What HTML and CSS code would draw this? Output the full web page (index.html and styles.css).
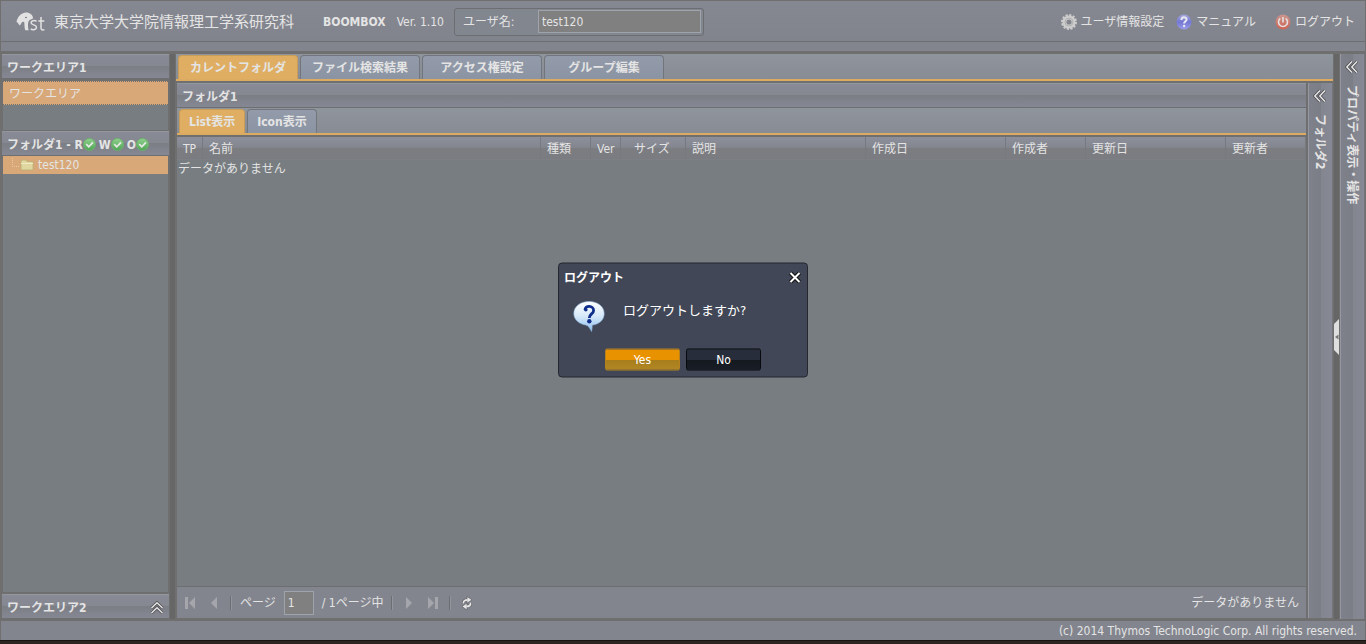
FILE: index.html
```html
<!DOCTYPE html>
<html lang="ja">
<head>
<meta charset="utf-8">
<title>BOOMBOX</title>
<link rel="stylesheet" href="styles.css">
</head>
<body>
<svg class="defs" aria-hidden="true">
  <defs>
    <linearGradient id="green" x1="0" y1="0" x2="0" y2="1"><stop offset="0" stop-color="#8fd08c"/><stop offset="1" stop-color="#4fa455"/></linearGradient>
    <linearGradient id="blue" x1="0" y1="0" x2="0" y2="1"><stop offset="0" stop-color="#a3a5dc"/><stop offset="0.5" stop-color="#7377d2"/><stop offset="1" stop-color="#9a9de8"/></linearGradient>
    <linearGradient id="red" x1="0" y1="0" x2="0" y2="1"><stop offset="0" stop-color="#c9968f"/><stop offset="1" stop-color="#cf6253"/></linearGradient>
    <linearGradient id="bubble" x1="0" y1="0" x2="0" y2="1"><stop offset="0" stop-color="#ffffff"/><stop offset="0.5" stop-color="#d5e8fa"/><stop offset="1" stop-color="#8fc0ee"/></linearGradient>
    <symbol id="check" viewBox="0 0 12 12"><circle cx="6" cy="6" r="5.6" fill="url(#green)" stroke="#6ab56b" stroke-width="0.7"/><path d="M3 5.7l2.3 2.4L9.2 4" fill="none" stroke="#e6e8e6" stroke-width="1.7"/></symbol>
    <symbol id="chevrons" viewBox="0 0 14 14"><path d="M7 1.5L1.8 7L7 12.5M12 1.5L6.8 7l5.200 5.500" fill="none" stroke="#4c4c50" stroke-width="3"/><path d="M7 1.500L1.800 7L7 12.500M12 1.500L6.800 7l5.200 5.500" fill="none" stroke="#e6e6e6" stroke-width="1.500"/></symbol>
  </defs>
</svg>
<div class="app">
  <header class="top">
    <div class="top-row">
      <svg class="logo" viewBox="0 0 30 20" aria-hidden="true">
        <path d="M.5 10C1.500 5 5 1 10 .6c4 0 7 2.600 7 5.600-1 1.300-2.500 1-3.600 2-1.400 1.300-1.200 2.600-1.400 4.200 0 2.200 0 4 .8 5.800H9.200c-.8-2.400-.6-5-1-8.200C6.500 9.500 5.800 10 4 13.500 2 12.300 2.400 10.500.5 10z" fill="#e2e2e2"/>
        <circle cx="10" cy="5.500" r=".8" fill="#666"/>
        <path d="M20.500 9.300c-2-1.300-5.500-.8-5.400 1.500 0 2.500 5.400 1.700 5.400 4.500 0 2.400-3.600 3-5.800 1.700M25 5v11c0 2 1.500 2.300 3.500 1.600M22.300 9h6" fill="none" stroke="#e2e2e2" stroke-width="1.500"/>
      </svg>
      <span class="org">東京大学大学院情報理工学系研究科</span>
      <strong class="product">BOOMBOX</strong>
      <span>Ver. 1.10</span>
      <div class="user-box">
        <label for="user">ユーザ名:</label>
        <input id="user" class="field user" type="text" value="test120" readonly>
      </div>
      <nav class="links">
        <a href="#"><svg class="icon" viewBox="0 0 16 16" aria-hidden="true"><circle cx="8" cy="8" r="7" fill="none" stroke="#cdcdcd" stroke-width="2" stroke-dasharray="2.200 1.460"/><circle cx="8" cy="8" r="4.600" fill="none" stroke="#cdcdcd" stroke-width="4"/><circle cx="8" cy="8" r="4" fill="none" stroke="#aaa" stroke-width=".8"/></svg>ユーザ情報設定</a>
        <a href="#"><svg class="icon" viewBox="0 0 16 16" aria-hidden="true"><circle cx="8" cy="8" r="7.500" fill="url(#blue)"/><path d="M5.400 6c0-3.600 5.200-3.300 5.200-.5 0 1.900-2.500 1.900-2.500 4" fill="none" stroke="#e8e8f0" stroke-width="2"/><circle cx="8.100" cy="12" r="1.200" fill="#e8e8f0"/></svg>マニュアル</a>
        <a href="#" class="logout"><svg class="icon" viewBox="0 0 16 16" aria-hidden="true"><circle cx="8" cy="8" r="7.500" fill="url(#red)"/><path d="M5.300 4.400a4.500 4.500 0 1 0 5.400 0M8 3v5.500" fill="none" stroke="#e4e0e0" stroke-width="1.600"/></svg>ログアウト</a>
      </nav>
    </div>
    <div class="top-strip"></div>
  </header>

  <main class="work">
    <aside class="left">
      <section class="pane">
        <h2 class="bar">ワークエリア1</h2>
        <div class="area"><a href="#" class="area-item">ワークエリア</a></div>
      </section>
      <section class="pane grow">
        <h2 class="bar">フォルダ1 - R<svg class="mark" aria-hidden="true"><use href="#check"/></svg> W<svg class="mark" aria-hidden="true"><use href="#check"/></svg> O<svg class="mark" aria-hidden="true"><use href="#check"/></svg></h2>
        <ul class="tree"><li>
          <svg class="elbow" viewBox="0 0 8 9" aria-hidden="true"><path d="M.5 0v8.500H8" fill="none" stroke="#e8c9a4" stroke-dasharray="1 1"/></svg>
          <svg class="folder" viewBox="0 0 14 12" aria-hidden="true"><path d="M1 11V2.500L2 1h4l1 1.500h6V11z" fill="#dfd79f" stroke="#b9ad75" stroke-width=".8"/><path d="M1 4.500h12" stroke="#efeac4"/></svg>
          test120</li></ul>
      </section>
      <button type="button" class="bar fold-up">ワークエリア2<svg class="chev up" aria-hidden="true"><use href="#chevrons"/></svg></button>
    </aside>
    <div class="splitter"></div>

    <section class="center">
      <div class="tabs main-tabs">
        <button type="button" class="tab active">カレントフォルダ</button>
        <button type="button" class="tab">ファイル検索結果</button>
        <button type="button" class="tab">アクセス権設定</button>
        <button type="button" class="tab">グループ編集</button>
      </div>
      <div class="folders">
        <div class="folder-pane">
          <h2 class="bar">フォルダ1</h2>
          <div class="tabs sub-tabs">
            <button type="button" class="tab active">List表示</button>
            <button type="button" class="tab">Icon表示</button>
          </div>
          <div class="list">
            <table class="grid">
              <colgroup><col class="w26"><col><col class="w50"><col class="w30"><col class="w65"><col class="w180"><col class="w140"><col class="w80"><col class="w140"><col class="w80"></colgroup>
              <thead><tr><th>TP</th><th>名前</th><th>種類</th><th>Ver</th><th class="mid">サイズ</th><th>説明</th><th>作成日</th><th>作成者</th><th>更新日</th><th>更新者</th></tr></thead>
              <tbody><tr><td colspan="10">データがありません</td></tr></tbody>
            </table>
          </div>
          <footer class="paging">
            <button type="button" class="pg" aria-label="最初"><svg viewBox="0 0 16 16"><path d="M3 2h3v12H3zM13 2v12L7 8z" fill="#a4a6ab"/></svg></button>
            <button type="button" class="pg" aria-label="前"><svg viewBox="0 0 16 16"><path d="M11 2v12L5 8z" fill="#a4a6ab"/></svg></button>
            <span class="sep"></span>
            <label for="page">ページ</label>
            <input id="page" class="field page" type="text" value="1">
            <span>/ 1ページ中</span>
            <span class="sep"></span>
            <button type="button" class="pg" aria-label="次"><svg viewBox="0 0 16 16"><path d="M5 2v12l6-6z" fill="#a4a6ab"/></svg></button>
            <button type="button" class="pg" aria-label="最後"><svg viewBox="0 0 16 16"><path d="M10 2h3v12h-3zM3 2v12l6-6z" fill="#a4a6ab"/></svg></button>
            <span class="sep"></span>
            <button type="button" class="pg" aria-label="更新"><svg viewBox="0 0 16 16"><path d="M4.500 8.500Q4 5 8.500 5M11.500 7.500Q12 11.500 7.500 11.500" fill="none" stroke="#55565a" stroke-width="3"/><path d="M8 1.500L13 4.800 8 8.300zM8 8L3 11.500 8 15z" fill="#e6e6e6" stroke="#55565a" stroke-width=".6"/><path d="M4.500 8.500Q4 5 8.500 5M11.500 7.500Q12 11.500 7.500 11.500" fill="none" stroke="#e6e6e6" stroke-width="1.800"/></svg></button>
            <span class="status">データがありません</span>
          </footer>
        </div>
        <button type="button" class="vbar"><svg class="chev" aria-hidden="true"><use href="#chevrons"/></svg><span>フォルダ2</span></button>
      </div>
    </section>
    <div class="splitter handle-holder"><svg class="handle" viewBox="0 0 5 36" aria-hidden="true"><path d="M5 0v36L0 31V5z" fill="#dedede"/><path d="M4.500 15.500v5L1 18z" fill="#777"/></svg></div>
    <button type="button" class="vbar"><svg class="chev" aria-hidden="true"><use href="#chevrons"/></svg><span>プロパティ表示・操作</span></button>
  </main>
  <footer class="copyright">(c) 2014 Thymos TechnoLogic Corp. All rights reserved.</footer>

  <div class="dialog" role="dialog" aria-labelledby="dialog-title">
    <div class="dialog-head"><h3 id="dialog-title">ログアウト</h3>
      <button type="button" class="close" aria-label="閉じる"><svg viewBox="0 0 14 14"><path d="M2.500 2.500l9 9M11.500 2.500l-9 9" stroke="#111" stroke-width="4"/><path d="M2.500 2.500l9 9M11.500 2.500l-9 9" stroke="#fff" stroke-width="2"/></svg></button></div>
    <div class="dialog-body">
      <svg class="question" viewBox="0 0 32 32" aria-hidden="true"><path d="M16 1C7 1 .8 6.200.8 13c0 6 5 10.300 12 11.600 2.500.5 3.700 2.600 5.700 6.400.8-2.500.6-4.300.7-6.300C27 23.500 31.200 19 31.200 13 31.200 6.200 25 1 16 1z" fill="url(#bubble)" stroke="#8eb5dd" stroke-width=".6"/><path d="M12 9.500c0-5 8.600-4.700 8.600.4 0 3.600-4.300 3.500-4.300 7.600" fill="none" stroke="#102f8c" stroke-width="2.800"/><circle cx="12.800" cy="9.300" r="1.800" fill="#102f8c"/><circle cx="16.300" cy="20.800" r="2.200" fill="#102f8c"/></svg>
      <p>ログアウトしますか?</p>
    </div>
    <div class="dialog-foot"><button type="button" class="yes">Yes</button><button type="button" class="no">No</button></div>
  </div>
</div>
<div class="desk"></div>
</body>
</html>
```
FILE: styles.css
```css
* { box-sizing: border-box; }
body {
  margin: 0;
  height: 100vh;
  display: flex;
  flex-direction: column;
  overflow: hidden;
  background: #6f6f6f;
  color: #e4e4e4;
  font: 12px/16px "DejaVu Sans Condensed", "Noto Sans CJK JP", sans-serif;
}
button, input { font: inherit; color: inherit; }
button { padding: 0; border: 0; background: none; }
a { color: inherit; text-decoration: none; }
h2, h3, p, ul { margin: 0; padding: 0; font-size: 12px; }
svg { display: block; }
.defs { position: absolute; width: 0; height: 0; }
.app { position: relative; flex: 1; min-height: 0; display: flex; flex-direction: column; padding: 1px 1px 0; }
.desk { height: 4px; background: #2e241f; border-top: 1px solid #171312; }

/* header */
.top { background: #82858e; }
.top-row { display: flex; align-items: center; height: 41px; padding: 1px 10px 0 15px; border-bottom: 1px solid #6d6e72; background: linear-gradient(#858891, #82848d); }
.logo { width: 30px; height: 20px; }
.org { margin: 0 29px 0 8px; font-size: 15px; line-height: 24px; }
.product { margin-right: 11px; }
.user-box { display: flex; align-items: center; width: 250px; height: 28px; margin-left: 10px; padding: 0 2px 0 8px; border: 1px solid #6d6e72; border-radius: 3px; background: #82868f; }
.user-box label { width: 75px; }
.field { border: 1px solid #9ea3ac; background: #808080; padding: 0 3px; outline: 0; }
.user { flex: 1; min-width: 0; height: 23px; }
.links { display: flex; margin-left: auto; gap: 12px; }
.links a { display: flex; align-items: center; gap: 4px; }
.links .logout { margin-left: 7px; }
.icon { width: 16px; height: 16px; }
.top-strip { height: 9px; }

/* left column */
.work { flex: 1; min-height: 0; display: flex; padding-top: 3px; }
.left { width: 168px; display: flex; flex-direction: column; padding-left: 1px; }
.bar {
  flex: none;
  display: flex;
  align-items: center;
  height: 25px;
  padding: 2px 5px 0;
  border-top: 1px solid #93969f;
  border-bottom: 1px solid #6d6e72;
  background: linear-gradient(#888a95 0, #858791 11px, #7c7e85 11px, #858793 100%);
  font-weight: bold;
}
.pane { display: flex; flex-direction: column; }
.grow { flex: 1; min-height: 0; }
.area { height: 49px; margin: 2px 1px 1px; background: #777d80; }
.area-item { display: block; height: 24px; padding: 4px 6px; border: dotted #6f6f6f; border-width: 1px 0; background: #d8a878; }
.left .bar { width: 167px; }
.mark { width: 13px; height: 13px; margin-right: 3px; }
.tree { flex: 1; list-style: none; margin: 0 1px 2px; background: #777d80; }
.tree li { display: flex; align-items: center; height: 18px; padding-left: 9px; background: #d8a878; }
.elbow { width: 8px; height: 9px; margin-bottom: 6px; }
.folder { width: 14px; height: 12px; margin-right: 4px; }
.fold-up { justify-content: space-between; }
.chev { width: 14px; height: 14px; flex: none; }
.up { transform: rotate(90deg); }
.splitter { width: 5px; background: #666; }
.left + .splitter { margin: 0 1px; }

/* center */
.center { flex: 1; min-width: 0; display: flex; flex-direction: column; }
.tabs { display: flex; align-items: flex-end; height: 27px; padding: 1px 2px 0; gap: 2px; border-bottom: 2px solid #dcaa60; background: linear-gradient(#8f959c, #888c94); }
.tab { height: 24px; border: 1px solid #72767c; border-bottom: 0; border-radius: 4px 4px 0 0; background: linear-gradient(#939baa, #8b94a2); font-weight: bold; }
.tab.active { border-color: #c79c59; background: #dfae62; }
.main-tabs .tab { width: 120px; }
.folders { flex: 1; min-height: 0; display: flex; gap: 2px; padding: 2px 0 1px 1px; }
.folder-pane { flex: 1; min-width: 0; display: flex; flex-direction: column; }
.sub-tabs { margin-bottom: 2px; }
.sub-tabs .tab { padding: 0 9px; }
.list { flex: 1; min-height: 0; background: #777d80; border-bottom: 1px solid #6d6e72; }
.grid { width: 100%; table-layout: fixed; border-collapse: separate; border-spacing: 0; }
.grid th { height: 23px; padding: 2px 6px 0; border-right: 1px solid #777981; border-bottom: 1px solid #7c8084; background: linear-gradient(#8d909b 0, #83858e 11px, #7c7d81 11px, #7b7c81); font-weight: normal; text-align: left; }
.grid th:first-child { padding-right: 0; }
.grid th.mid { padding-left: 13px; }
.grid td { padding: 1px 1px 0; }
.w26 { width: 26px; }
.w30 { width: 30px; }
.w50 { width: 50px; }
.w65 { width: 65px; }
.w80 { width: 80px; }
.w140 { width: 140px; }
.w180 { width: 180px; }
.paging { display: flex; align-items: center; gap: 8px; height: 31px; padding: 0 7px 0 5px; background: #82858e; }
.pg { width: 16px; height: 16px; }
.sep { width: 2px; height: 14px; border-left: 1px solid #6d6e72; border-right: 1px solid #92959d; }
.page { width: 30px; height: 24px; }
.status { margin-left: auto; }

/* collapsed side panels */
.vbar { display: flex; flex-direction: column; align-items: center; width: 25px; padding: 6px 2px 6px 0; gap: 11px; border-left: 1px solid #9597a2; border-right: 1px solid #74757b; background: linear-gradient(90deg, #7f818a 0, #7c7e87 12px, #83858f 12px, #868894 100%); }
.vbar span { writing-mode: vertical-rl; text-orientation: sideways; font-weight: bold; }
.handle-holder { display: flex; align-items: center; margin: 0 1px; }
.handle { width: 5px; height: 36px; }
.copyright { height: 19px; margin-top: 2px; padding: 2px 8px 0; text-align: right; background: #82858e; }

/* dialog */
.dialog { position: absolute; left: 50%; top: 50%; transform: translate(-50%, -50%); width: 250px; padding: 5px 5px 6px; border: 1px solid #24272e; border-radius: 4px; background: #414756; color: #fff; }
.dialog-head { display: flex; justify-content: space-between; align-items: center; height: 18px; }
.close { width: 14px; height: 14px; }
.dialog-body { display: flex; gap: 18px; height: 62px; padding: 14px 9px 0; }
.dialog-body p { padding-top: 2px; font-size: 13px; }
.question { width: 32px; height: 32px; }
.dialog-foot { display: flex; justify-content: center; gap: 6px; }
.dialog-foot button { width: 75px; height: 22px; border-radius: 2px; }
.yes { border: 1px solid #b7821d; background: linear-gradient(#e99200 0 50%, #a77d1c 50%, #b18725); }
.no { border: 1px solid #07090c; background: linear-gradient(#272d3a 0 50%, #14181f 50%, #191d25); }
```
